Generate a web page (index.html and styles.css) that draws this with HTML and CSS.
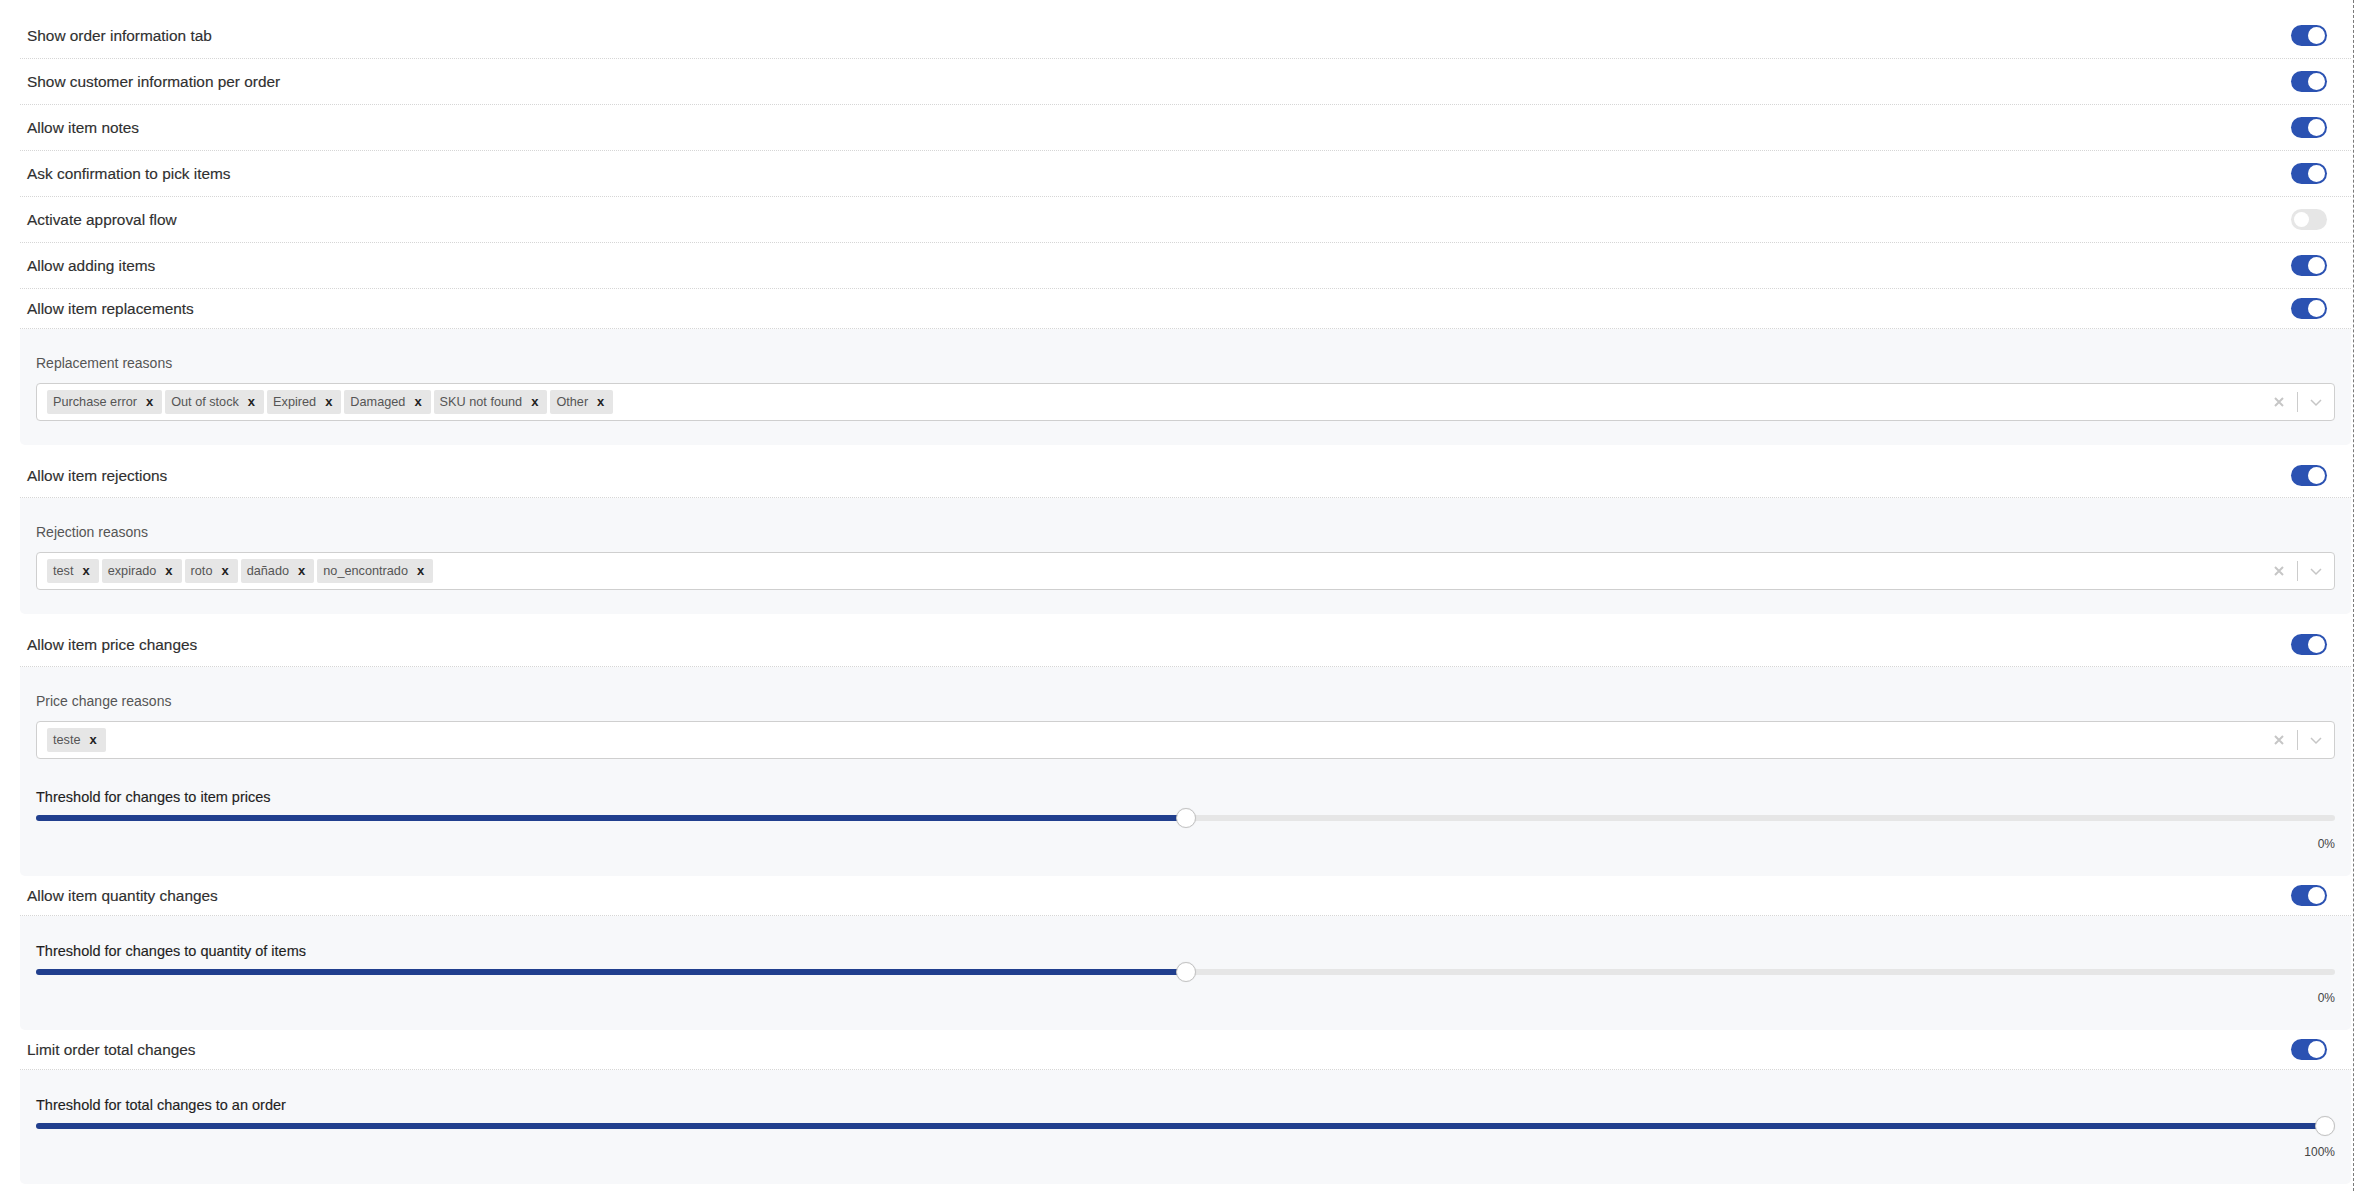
FILE: index.html
```html
<!DOCTYPE html>
<html lang="en">
<head>
<meta charset="utf-8">
<title>Picking settings</title>
<link rel="stylesheet" href="styles.css">
</head>
<body>
<div class="frame">
  <div class="settings">

    <div class="row row--tall"><span class="row-title">Show order information tab</span><span class="toggle toggle--on"><span class="knob"></span></span></div>
    <div class="row row--tall"><span class="row-title">Show customer information per order</span><span class="toggle toggle--on"><span class="knob"></span></span></div>
    <div class="row row--tall"><span class="row-title">Allow item notes</span><span class="toggle toggle--on"><span class="knob"></span></span></div>
    <div class="row row--tall"><span class="row-title">Ask confirmation to pick items</span><span class="toggle toggle--on"><span class="knob"></span></span></div>
    <div class="row row--tall"><span class="row-title">Activate approval flow</span><span class="toggle toggle--off"><span class="knob"></span></span></div>
    <div class="row row--tall"><span class="row-title">Allow adding items</span><span class="toggle toggle--on"><span class="knob"></span></span></div>
    <div class="row row--short"><span class="row-title">Allow item replacements</span><span class="toggle toggle--on"><span class="knob"></span></span></div>

    <div class="panel">
      <div class="field field--select">
        <div class="field-label">Replacement reasons</div>
        <div class="select">
          <div class="select-values">
            <span class="tag"><span class="tag-label">Purchase error</span><span class="tag-remove">x</span></span>
            <span class="tag"><span class="tag-label">Out of stock</span><span class="tag-remove">x</span></span>
            <span class="tag"><span class="tag-label">Expired</span><span class="tag-remove">x</span></span>
            <span class="tag"><span class="tag-label">Damaged</span><span class="tag-remove">x</span></span>
            <span class="tag"><span class="tag-label">SKU not found</span><span class="tag-remove">x</span></span>
            <span class="tag"><span class="tag-label">Other</span><span class="tag-remove">x</span></span>
          </div>
          <div class="select-indicators">
            <span class="indicator"><svg width="20" height="20" viewBox="0 0 20 20"><path d="M6 6 L14 14 M14 6 L6 14" stroke="#c6c6c6" stroke-width="2" fill="none"/></svg></span>
            <span class="indicator-sep"></span>
            <span class="indicator"><svg width="20" height="20" viewBox="0 0 20 20"><polyline points="5,8 10,13 15,8" stroke="#c6c6c6" stroke-width="1.5" fill="none"/></svg></span>
          </div>
        </div>
      </div>
    </div>

    <div class="row row--spaced"><span class="row-title">Allow item rejections</span><span class="toggle toggle--on"><span class="knob"></span></span></div>

    <div class="panel">
      <div class="field field--select">
        <div class="field-label">Rejection reasons</div>
        <div class="select">
          <div class="select-values">
            <span class="tag"><span class="tag-label">test</span><span class="tag-remove">x</span></span>
            <span class="tag"><span class="tag-label">expirado</span><span class="tag-remove">x</span></span>
            <span class="tag"><span class="tag-label">roto</span><span class="tag-remove">x</span></span>
            <span class="tag"><span class="tag-label">dañado</span><span class="tag-remove">x</span></span>
            <span class="tag"><span class="tag-label">no_encontrado</span><span class="tag-remove">x</span></span>
          </div>
          <div class="select-indicators">
            <span class="indicator"><svg width="20" height="20" viewBox="0 0 20 20"><path d="M6 6 L14 14 M14 6 L6 14" stroke="#c6c6c6" stroke-width="2" fill="none"/></svg></span>
            <span class="indicator-sep"></span>
            <span class="indicator"><svg width="20" height="20" viewBox="0 0 20 20"><polyline points="5,8 10,13 15,8" stroke="#c6c6c6" stroke-width="1.5" fill="none"/></svg></span>
          </div>
        </div>
      </div>
    </div>

    <div class="row row--spaced"><span class="row-title">Allow item price changes</span><span class="toggle toggle--on"><span class="knob"></span></span></div>

    <div class="panel">
      <div class="field field--select">
        <div class="field-label">Price change reasons</div>
        <div class="select">
          <div class="select-values">
            <span class="tag"><span class="tag-label">teste</span><span class="tag-remove">x</span></span>
          </div>
          <div class="select-indicators">
            <span class="indicator"><svg width="20" height="20" viewBox="0 0 20 20"><path d="M6 6 L14 14 M14 6 L6 14" stroke="#c6c6c6" stroke-width="2" fill="none"/></svg></span>
            <span class="indicator-sep"></span>
            <span class="indicator"><svg width="20" height="20" viewBox="0 0 20 20"><polyline points="5,8 10,13 15,8" stroke="#c6c6c6" stroke-width="1.5" fill="none"/></svg></span>
          </div>
        </div>
      </div>
      <div class="field field--slider">
        <div class="slider-label">Threshold for changes to item prices</div>
        <div class="slider">
          <div class="slider-track"><div class="slider-fill" style="width: calc(10px + (100% - 20px) * 0.5)"></div></div>
          <div class="slider-thumb" style="left: calc((100% - 20px) * 0.5)"></div>
        </div>
        <div class="slider-value">0%</div>
      </div>
    </div>

    <div class="row row--short"><span class="row-title">Allow item quantity changes</span><span class="toggle toggle--on"><span class="knob"></span></span></div>

    <div class="panel">
      <div class="field field--slider">
        <div class="slider-label">Threshold for changes to quantity of items</div>
        <div class="slider">
          <div class="slider-track"><div class="slider-fill" style="width: calc(10px + (100% - 20px) * 0.5)"></div></div>
          <div class="slider-thumb" style="left: calc((100% - 20px) * 0.5)"></div>
        </div>
        <div class="slider-value">0%</div>
      </div>
    </div>

    <div class="row row--short"><span class="row-title">Limit order total changes</span><span class="toggle toggle--on"><span class="knob"></span></span></div>

    <div class="panel">
      <div class="field field--slider">
        <div class="slider-label">Threshold for total changes to an order</div>
        <div class="slider">
          <div class="slider-track"><div class="slider-fill" style="width: calc(10px + (100% - 20px) * 1)"></div></div>
          <div class="slider-thumb" style="left: calc((100% - 20px) * 1)"></div>
        </div>
        <div class="slider-value">100%</div>
      </div>
    </div>

  </div>
</div>
</body>
</html>
```

FILE: styles.css
```css
html, body {
  margin: 0;
  padding: 0;
  background: #ffffff;
}

body {
  font-family: "Liberation Sans", Arial, sans-serif;
  color: #333333;
}

.frame {
  width: 2354px;
  min-height: 1191px;
  box-sizing: border-box;
  padding: 13px 2px 0 20px;
  border-right: 1px dashed #7a7a7a;
}

.settings {
  display: flex;
  flex-direction: column;
}

/* ---------- toggle rows ---------- */
.row {
  display: flex;
  align-items: center;
  justify-content: space-between;
  padding: 0 24px 0 7px;
  border-bottom: 1px dotted #d6d6d6;
  height: 41px;
}

.row--tall {
  height: 45px;
}

.row--short {
  height: 39px;
}

.row--spaced {
  margin-top: 9px;
  height: 43px;
}

.row-title {
  font-size: 15.4px;
  line-height: 18px;
  color: #303030;
  -webkit-text-stroke: 0.15px #303030;
}

.toggle {
  display: flex;
  align-items: center;
  width: 36px;
  height: 21px;
  box-sizing: border-box;
  padding: 0 2px;
  border-radius: 11px;
}

.toggle--on {
  background: #2b52b2;
  justify-content: flex-end;
}

.toggle--off {
  background: #e6e6e6;
  justify-content: flex-start;
}

.knob {
  width: 17px;
  height: 17px;
  border-radius: 50%;
  background: #ffffff;
}

.toggle--off .knob {
  width: 15px;
  height: 15px;
  margin-left: 1px;
}

/* ---------- expanded panels ---------- */
.panel {
  background: #f7f8fa;
  border-radius: 0 0 5px 5px;
  padding: 0 16px 24px 16px;
}

.field--select {
  padding-top: 26px;
}

.field--slider {
  padding-top: 27px;
}

.field + .field {
  padding-top: 30px;
}

.field-label {
  font-size: 14px;
  line-height: 17px;
  color: #555555;
  margin-bottom: 11px;
}

/* ---------- multi select ---------- */
.select {
  display: flex;
  align-items: center;
  height: 38px;
  box-sizing: border-box;
  border: 1px solid #cfcfcf;
  border-radius: 4px;
  background: #ffffff;
}

.select-values {
  flex: 1;
  display: flex;
  align-items: center;
  gap: 3px;
  padding-left: 10px;
}

.tag {
  display: inline-flex;
  align-items: center;
  height: 24px;
  background: #e6e6e6;
  border-radius: 2px;
}

.tag-label {
  padding-left: 6px;
  font-size: 12.7px;
  color: #555555;
}

.tag-remove {
  padding: 0 9px 0 9px;
  font-size: 13px;
  font-weight: bold;
  line-height: 13px;
  color: #222222;
  margin-top: -2px;
}

.select-indicators {
  display: flex;
  align-items: center;
}

.indicator {
  display: flex;
  align-items: center;
  justify-content: center;
  width: 36px;
  height: 36px;
}

.indicator-sep {
  width: 1px;
  height: 20px;
  background: #cccccc;
}

/* ---------- sliders ---------- */
.slider-label {
  font-size: 14.5px;
  line-height: 17px;
  color: #1f1f1f;
  -webkit-text-stroke: 0.15px #1f1f1f;
}

.slider {
  position: relative;
  height: 24px;
  display: flex;
  align-items: center;
}

.slider-track {
  flex: 1;
  height: 6px;
  border-radius: 3px;
  background: #e6e6e6;
  display: flex;
}

.slider-fill {
  height: 6px;
  border-radius: 3px;
  background: #213f8e;
}

.slider-thumb {
  position: absolute;
  top: 2px;
  width: 20px;
  height: 20px;
  box-sizing: border-box;
  border: 1px solid #c4c4c4;
  border-radius: 50%;
  background: #ffffff;
  box-shadow: 0 0 1px rgba(0, 0, 0, 0.15);
}

.slider-value {
  margin-top: 6px;
  text-align: right;
  font-size: 12px;
  line-height: 16px;
  color: #444444;
}
```
